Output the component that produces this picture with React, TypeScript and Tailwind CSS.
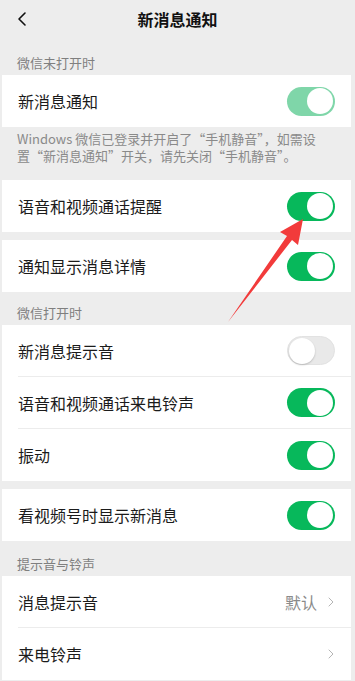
import { ChevronLeft, ChevronRight } from "lucide-react";

type Row = { label: string; on?: boolean; faded?: boolean; value?: string; link?: boolean };

function Toggle({ on, faded }: { on: boolean; faded?: boolean }) {
  if (!on) {
    return (
      <div className="w-[48px] h-[29px] rounded-full bg-[#e9e9e9] border border-[#e2e2e2] flex items-center pl-[1px]">
        <div className="w-[26px] h-[26px] rounded-full bg-white shadow-[0_1px_2px_rgba(0,0,0,0.2)]" />
      </div>
    );
  }
  return (
    <div
      className={
        faded
          ? "w-[48px] h-[29px] rounded-full bg-[#7fd6a9] flex items-center justify-end pr-[2px]"
          : "w-[48px] h-[29px] rounded-full bg-[#07b85b] flex items-center justify-end pr-[2px]"
      }
    >
      <div className="w-[26px] h-[26px] rounded-full bg-white" />
    </div>
  );
}

function Group({ rows }: { rows: Row[] }) {
  return (
    <div className="bg-white ml-[2px] mr-[4px]">
      {rows.map((r, i) => (
        <div key={r.label} className="pl-[16px]">
          <div
            className={
              i < rows.length - 1
                ? "h-[52px] flex items-center justify-between pr-[16px] border-b border-[#ececec]"
                : "h-[52px] flex items-center justify-between pr-[16px]"
            }
          >
            <span className="text-[16px] text-[#1b1b1b]">{r.label}</span>
            {r.link ? (
              <div className="flex items-center gap-[6px] text-[#a8a8a8]">
                {r.value && <span className="text-[16px] text-[#8a8a8a]">{r.value}</span>}
                <ChevronRight size={16} strokeWidth={1.5} className="text-[#b5b5b5] -mr-[4px]" />
              </div>
            ) : (
              <Toggle on={!!r.on} faded={r.faded} />
            )}
          </div>
        </div>
      ))}
    </div>
  );
}

function SectionLabel({ text, h }: { text: string; h: string }) {
  return <div className={h + " flex items-end pb-[3px] pl-[17px] text-[13px] text-[#7f7f7f]"}>{text}</div>;
}

export default function App() {
  return (
    <div
      className="relative w-[355px] h-[681px] overflow-hidden bg-[#ededed]"
      style={{ fontFamily: '"Noto Sans CJK SC", "Noto Sans", sans-serif' }}
    >
      {/* top bar */}
      <div className="h-[38px] flex items-center relative">
        <ChevronLeft size={24} strokeWidth={1.6} className="absolute left-[10px] top-[7px] text-[#111]" />
        <div className="flex-1 text-center text-[16px] font-bold text-[#111]">新消息通知</div>
      </div>

      <SectionLabel h="h-[37px]" text="微信未打开时" />
      <Group rows={[{ label: "新消息通知", on: true, faded: true }]} />
      <div className="pl-[17px] pr-[20px] pt-[3px] pb-[4px] h-[53px] text-[13px] leading-[17px] text-[#8a8a8a]">
        Windows 微信已登录并开启了“手机静音”，如需设置“新消息通知”开关，请先关闭“手机静音”。
      </div>
      <Group rows={[{ label: "语音和视频通话提醒", on: true }]} />
      <div className="h-[8px]" />
      <Group rows={[{ label: "通知显示消息详情", on: true }]} />

      <SectionLabel h="h-[33px]" text="微信打开时" />
      <Group
        rows={[
          { label: "新消息提示音", on: false },
          { label: "语音和视频通话来电铃声", on: true },
          { label: "振动", on: true },
        ]}
      />
      <div className="h-[8px]" />
      <Group rows={[{ label: "看视频号时显示新消息", on: true }]} />

      <SectionLabel h="h-[35px]" text="提示音与铃声" />
      <Group
        rows={[
          { label: "消息提示音", value: "默认", link: true },
          { label: "来电铃声", link: true },
        ]}
      />

      {/* red annotation arrow */}
      <svg className="absolute left-0 top-0 pointer-events-none" width="355" height="681" viewBox="0 0 355 681">
        <polygon points="303,219 298,245 292,240 228,322 287,236 280,232" fill="#f23b3b" />
      </svg>
    </div>
  );
}
